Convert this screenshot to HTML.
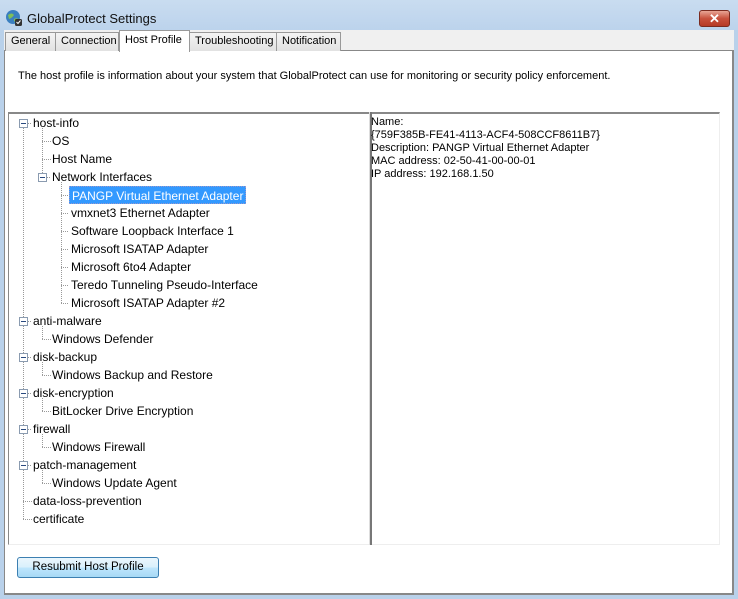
<!DOCTYPE html>
<html><head><style>
*{margin:0;padding:0;box-sizing:border-box}
body{width:738px;height:599px;overflow:hidden;background:#b9d1ea;font-family:"Liberation Sans",sans-serif;font-size:12px;color:#000;position:relative}
.abs{position:absolute}
.title{left:0;top:0;width:738px;height:30px;background:linear-gradient(#c9dcf0,#bcd3ec)}
.tab{position:absolute;top:32px;height:19px;border:1px solid #999;border-bottom:none;background:linear-gradient(#f4f4f4,#e2e2e2);font-size:11px;line-height:17px;padding-left:5px;white-space:nowrap;overflow:hidden}
.row{position:absolute;height:18px;line-height:18px;white-space:nowrap;font-size:12px}
.info{position:absolute;left:371px;font-size:11px;line-height:13px}
</style></head><body>
<div class="abs title"></div>
<svg class="abs" style="left:5px;top:9px" width="18" height="18" viewBox="0 0 18 18">
<circle cx="8" cy="8" r="7" fill="#3a7fc0"/><path d="M3 6 Q7 3 9 6 Q7 9 4 10Z M9 10 Q12 8 14 11 Q11 14 9 12Z" fill="#7fbf5a"/>
<rect x="10" y="10" width="7" height="7" rx="1.5" fill="#333"/><path d="M11.5 13 l1.5 1.5 l2.5-3" stroke="#fff" fill="none" stroke-width="1"/></svg>
<div class="abs" style="left:27px;top:11px;font-size:13px;color:#111">GlobalProtect Settings</div>
<div class="abs" style="left:699px;top:10px;width:31px;height:17px;border:1px solid #7b2b20;border-radius:3px;background:linear-gradient(#e8a595,#c8513d 50%,#b53a26);color:#fff;font-weight:bold;text-align:center;line-height:15px;font-size:13px">✕</div>
<div class="abs" style="left:4px;top:30px;width:730px;height:565px;background:#f0f0f0"></div>
<div class="abs" style="left:4px;top:50px;width:730px;height:545px;background:#fff;border:1px solid #888;border-right:2px solid #888;border-bottom:2px solid #888"></div>
<div class="tab" style="left:5px;width:51px">General</div>
<div class="tab" style="left:55px;width:64px">Connection</div>
<div class="tab" style="left:276px;width:65px">Notification</div>
<div class="tab" style="left:189px;width:88px">Troubleshooting</div>
<div class="tab" style="left:119px;top:30px;height:22px;width:71px;background:#fff;line-height:19px">Host Profile</div>
<div class="abs" style="left:18px;top:70px;font-size:11px">The host profile is information about your system that GlobalProtect can use for monitoring or security policy enforcement.</div>
<div class="abs" style="left:8px;top:112px;width:361px;height:433px;border-top:2px solid #888;border-left:1px solid #888;border-bottom:1px solid #eee"></div>
<div class="abs" style="left:369px;top:112px;width:3px;height:433px;background:#fff;border-left:1px solid #ddd;border-right:2px solid #777"></div>
<div class="abs" style="left:372px;top:112px;width:348px;height:433px;border-top:2px solid #888;border-right:1px solid #eee;border-bottom:1px solid #eee"></div>
<div class="info" style="top:116px">Name:<br>{759F385B-FE41-4113-ACF4-508CCF8611B7}<br>Description: PANGP Virtual Ethernet Adapter<br>MAC address: 02-50-41-00-00-01<br>IP address: 192.168.1.50</div>
<svg class="abs" style="left:0;top:0" width="370" height="545">
<g stroke="#999" stroke-dasharray="1,1" fill="none">
<path d="M23.5 128 V519"/>
<path d="M42.5 128 V176"/>
<path d="M61.5 182 V303"/>
<path d="M42.5 326 V339 M42.5 362 V375 M42.5 398 V411 M42.5 434 V447 M42.5 470 V483"/>
<path d="M28 123.5H32 M42 141.5H51 M42 159.5H51 M47 177.5H51 M61 195.5H69 M61 213.5H69 M61 231.5H69 M61 249.5H69 M61 267.5H69 M61 285.5H69 M61 303.5H69 M28 321.5H32 M42 339.5H51 M28 357.5H32 M42 375.5H51 M28 393.5H32 M42 411.5H51 M28 429.5H32 M42 447.5H51 M28 465.5H32 M42 483.5H51 M23 501.5H32 M23 519.5H32"/>
</g>
<g fill="#fff" stroke="#8a9bb0">
<rect x="19.5" y="119.5" width="8" height="8"/><rect x="38.5" y="173.5" width="8" height="8"/>
<rect x="19.5" y="317.5" width="8" height="8"/><rect x="19.5" y="353.5" width="8" height="8"/>
<rect x="19.5" y="389.5" width="8" height="8"/><rect x="19.5" y="425.5" width="8" height="8"/>
<rect x="19.5" y="461.5" width="8" height="8"/>
</g>
<g stroke="#2a4a80"><path d="M21 123.5h5 M40 177.5h5 M21 321.5h5 M21 357.5h5 M21 393.5h5 M21 429.5h5 M21 465.5h5"/></g>
</svg>
<div class="row" style="left:33px;top:114px">host-info</div>
<div class="row" style="left:52px;top:132px">OS</div>
<div class="row" style="left:52px;top:150px">Host Name</div>
<div class="row" style="left:52px;top:168px">Network Interfaces</div>
<div class="row" style="left:69px;top:186px;background:#3399ff;color:#fff;padding:0 2px;border:1px dotted #99c">PANGP Virtual Ethernet Adapter</div>
<div class="row" style="left:71px;top:204px">vmxnet3 Ethernet Adapter</div>
<div class="row" style="left:71px;top:222px">Software Loopback Interface 1</div>
<div class="row" style="left:71px;top:240px">Microsoft ISATAP Adapter</div>
<div class="row" style="left:71px;top:258px">Microsoft 6to4 Adapter</div>
<div class="row" style="left:71px;top:276px">Teredo Tunneling Pseudo-Interface</div>
<div class="row" style="left:71px;top:294px">Microsoft ISATAP Adapter #2</div>
<div class="row" style="left:33px;top:312px">anti-malware</div>
<div class="row" style="left:52px;top:330px">Windows Defender</div>
<div class="row" style="left:33px;top:348px">disk-backup</div>
<div class="row" style="left:52px;top:366px">Windows Backup and Restore</div>
<div class="row" style="left:33px;top:384px">disk-encryption</div>
<div class="row" style="left:52px;top:402px">BitLocker Drive Encryption</div>
<div class="row" style="left:33px;top:420px">firewall</div>
<div class="row" style="left:52px;top:438px">Windows Firewall</div>
<div class="row" style="left:33px;top:456px">patch-management</div>
<div class="row" style="left:52px;top:474px">Windows Update Agent</div>
<div class="row" style="left:33px;top:492px">data-loss-prevention</div>
<div class="row" style="left:33px;top:510px">certificate</div>
<div class="abs" style="left:17px;top:557px;width:142px;height:21px;border:1px solid #3c7fb1;border-radius:3px;background:linear-gradient(#eaf6fd 0%,#d9f0fc 50%,#bee6fd 51%,#a7d9f5 100%);text-align:center;line-height:19px;font-size:11.5px">Resubmit Host Profile</div>
</body></html>
